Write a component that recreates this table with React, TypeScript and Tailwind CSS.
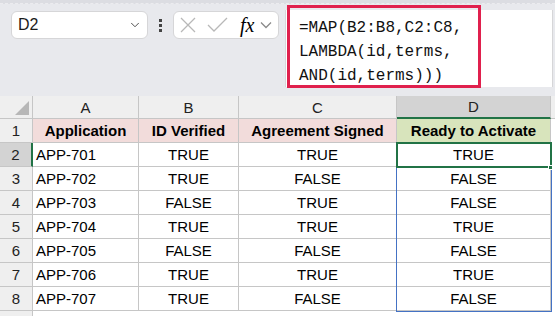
import { ChevronDown } from "lucide-react";

const rows = [
  ["APP-701", "TRUE", "TRUE", "TRUE"],
  ["APP-702", "TRUE", "FALSE", "FALSE"],
  ["APP-703", "FALSE", "TRUE", "FALSE"],
  ["APP-704", "TRUE", "TRUE", "TRUE"],
  ["APP-705", "FALSE", "FALSE", "FALSE"],
  ["APP-706", "TRUE", "TRUE", "TRUE"],
  ["APP-707", "TRUE", "FALSE", "FALSE"],
];

const cols = ["A", "B", "C", "D"];
const heads = ["Application", "ID Verified", "Agreement Signed", "Ready to Activate"];

const cell = "border-r border-b border-[#c6c6c6] flex items-center pt-[2px]";

export default function App() {
  return (
    <div className="w-[555px] h-[316px] overflow-hidden bg-[#e8e9ed] font-['Liberation_Sans',Arial,sans-serif] text-[15px] text-black">
      <div className="h-[4px] bg-[#dcdde2] border-b border-dashed border-[#ececef]" />

      {/* formula bar */}
      <div className="relative h-[92px] flex items-start">
        <div className="mt-[7px] ml-[11px] w-[137px] h-[28px] bg-white rounded-[6px] border border-[#d6d6d8] flex items-center justify-between pl-[6px] pr-[5px]">
          <span className="text-[16px] text-[#1b1b1b]">D2</span>
          <ChevronDown size={14} strokeWidth={1.6} className="text-[#444]" />
        </div>
        <div className="mt-[15px] ml-[11px] flex flex-col gap-[2px]">
          <span className="w-[3px] h-[3px] bg-[#444]" />
          <span className="w-[3px] h-[3px] bg-[#444]" />
          <span className="w-[3px] h-[3px] bg-[#444]" />
        </div>
        <div className="mt-[7px] ml-[11px] w-[106px] h-[28px] shrink-0 bg-white rounded-[6px] border border-[#d6d6d8] flex items-center pl-[6px]">
          <svg width="16" height="16" viewBox="0 0 16 16" className="shrink-0 text-[#b8b8b8]">
            <path d="M1 1 L15 15 M15 1 L1 15" stroke="currentColor" strokeWidth="1.3" fill="none" />
          </svg>
          <svg width="21" height="16" viewBox="0 0 21 16" className="shrink-0 ml-[11px] text-[#b8b8b8]">
            <path d="M1 8 L7 14 L20 1" stroke="currentColor" strokeWidth="1.3" fill="none" />
          </svg>
          <span className="shrink-0 ml-[12px] font-['Liberation_Serif',serif] italic text-[20px] leading-none text-black">fx</span>
          <svg width="12" height="8" viewBox="0 0 12 8" className="shrink-0 ml-[6px] text-[#8a8a8a]">
            <path d="M1 1.5 L6 6.5 L11 1.5" stroke="currentColor" strokeWidth="1.3" fill="none" />
          </svg>
        </div>
        <div className="mt-[6px] ml-[6px] flex-1 mr-[2px] h-[77px] bg-white border-l border-r border-[#d6d6d8] pl-[13px] pt-[6px] font-['Liberation_Mono',monospace] text-[16px] leading-[24px] text-[#111]">
          <div>=MAP(B2:B8,C2:C8,</div>
          <div>LAMBDA(id,terms,</div>
          <div>AND(id,terms)))</div>
        </div>
        <div className="absolute left-[287px] top-[1px] w-[194px] h-[83px] border-[3px] border-[#e0204d] pointer-events-none" />
      </div>

      {/* grid */}
      <div className="relative bg-white grid grid-cols-[33px_106px_100px_158px_154px_1fr] grid-rows-[23px_repeat(8,24px)_10px]">
        {/* column headers */}
        <div className={`${cell} bg-[#efefef] justify-end items-end pr-[3px] pb-[3px]`}>
          <svg width="14" height="14" viewBox="0 0 14 14">
            <path d="M14 0 L14 14 L0 14 Z" fill="#b7b7b7" />
          </svg>
        </div>
        {cols.map((c) => (
          <div
            key={c}
            className={`${cell} justify-center text-[#222] ${
              c === "D" ? "bg-[#d3d3d3] border-b-2 border-b-[#217346] text-[#1e5a8a]" : "bg-[#efefef]"
            }`}
          >
            {c}
          </div>
        ))}
        <div className="bg-[#efefef] border-b border-[#c6c6c6]" />

        {/* row 1 */}
        <div className={`${cell} bg-[#efefef] justify-center text-[#222]`}>1</div>
        {heads.map((h, i) => (
          <div
            key={h}
            className={`${cell} justify-center font-bold ${i === 3 ? "bg-[#d8e4bc]" : "bg-[#f2dcdb]"}`}
          >
            {h}
          </div>
        ))}
        <div className="bg-white" />

        {rows.map((r, ri) => (
          <div key={ri} className="contents">
            <div
              className={`${cell} justify-center text-[#222] ${
                ri === 0 ? "bg-[#d3d3d3] border-r-2 border-r-[#217346]" : "bg-[#efefef]"
              }`}
            >
              {ri + 2}
            </div>
            <div className={`${cell} pl-[3px]`}>{r[0]}</div>
            <div className={`${cell} justify-center`}>{r[1]}</div>
            <div className={`${cell} justify-center`}>{r[2]}</div>
            <div className={`${cell} justify-center`}>{r[3]}</div>
            <div className="bg-white" />
          </div>
        ))}

        <div className="bg-[#efefef] border-r border-[#c6c6c6]" />
        <div className="col-span-5 bg-white" />

        {/* spill range */}
        <div className="absolute left-[396px] top-[47px] w-[156px] h-[169px] border border-[#4472c4] pointer-events-none" />
        {/* active cell */}
        <div className="absolute left-[396px] top-[46px] w-[156px] h-[26px] border-2 border-[#217346] pointer-events-none" />
        <div className="absolute left-[548px] top-[69px] w-[5px] h-[5px] bg-[#217346] border border-white pointer-events-none" />
      </div>
    </div>
  );
}
